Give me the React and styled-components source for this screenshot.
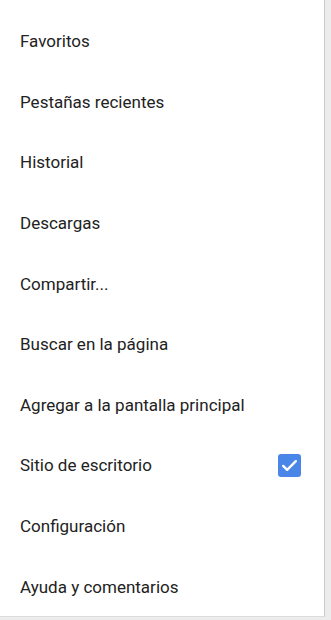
import React from "react";
import styled, { createGlobalStyle } from "styled-components";

const GlobalStyle = createGlobalStyle`
  html, body {
    margin: 0;
    padding: 0;
    background: #ececec;
  }
  body {
    font-family: Roboto, "Liberation Sans", sans-serif;
  }
`;

const Page = styled.div`
  width: 331px;
  height: 620px;
  display: flex;
  align-items: flex-start;
  overflow: hidden;
`;

const Menu = styled.ul`
  list-style: none;
  margin: 0;
  padding: 11px 0 0;
  width: 325px;
  height: 617px;
  box-sizing: border-box;
  background: #fff;
  border-right: 1px solid #c9c9c9;
  border-bottom: 1px solid #dcdcdc;
`;

const Item = styled.li`
  height: 60.6px;
  display: flex;
  align-items: center;
  justify-content: space-between;
  padding: 0 23px 0 20px;
  font-size: 17px;
  color: #222;
`;

const Check = styled.span`
  width: 23px;
  height: 23px;
  border-radius: 3px;
  background: #4a86e8;
  display: flex;
  align-items: center;
  justify-content: center;
`;

const items = [
  "Favoritos",
  "Pestañas recientes",
  "Historial",
  "Descargas",
  "Compartir...",
  "Buscar en la página",
  "Agregar a la pantalla principal",
  "Sitio de escritorio",
  "Configuración",
  "Ayuda y comentarios",
];

export default function App() {
  return (
    <Page>
      <GlobalStyle />
      <Menu>
        {items.map((label) => (
          <Item key={label}>
            <span>{label}</span>
            {label === "Sitio de escritorio" && (
              <Check>
                <svg width="19" height="19" viewBox="0 0 24 24">
                  <path
                    d="M4 12.5l5 5L20 6.5"
                    fill="none"
                    stroke="#fff"
                    strokeWidth="3"
                    strokeLinecap="round"
                    strokeLinejoin="round"
                  />
                </svg>
              </Check>
            )}
          </Item>
        ))}
      </Menu>
    </Page>
  );
}
